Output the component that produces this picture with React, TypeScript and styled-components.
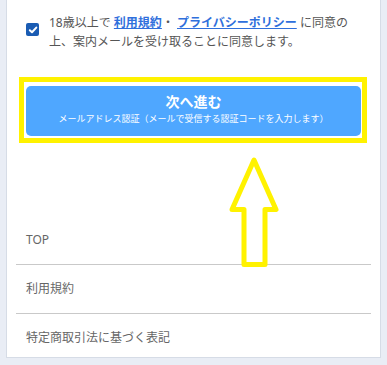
import React from "react";
import styled, { createGlobalStyle } from "styled-components";

const Global = createGlobalStyle`
  html, body { margin: 0; padding: 0; background: #e9edf5; }
  body { font-family: "Noto Sans", "Noto Sans CJK JP", sans-serif; }
  * { box-sizing: border-box; }
`;

const Page = styled.div`
  padding: 0 6px 8px;
`;

const Card = styled.div`
  position: relative;
  background: #ffffff;
  border: 1px solid #d6dce6;
  border-top: none;
  padding: 13px 9px 0;
`;

const Section = styled.div`
  padding: 0 10px;
`;

const AgreeRow = styled.label`
  display: flex;
  align-items: flex-start;
  gap: 10px;
`;

const CheckBox = styled.span`
  flex: none;
  width: 13px;
  height: 13px;
  margin-top: 10px;
  border-radius: 2px;
  background: #1a5cb3;
  display: flex;
  align-items: center;
  justify-content: center;
`;

const AgreeText = styled.p`
  margin: 0;
  font-size: 12px;
  line-height: 19px;
  color: #555555;
`;

const TextLink = styled.a`
  color: #2f6fdc;
  font-weight: 700;
  text-decoration: underline;
`;

const ButtonWrap = styled.div`
  position: relative;
  margin-top: 35px;
`;

const Highlight = styled.div`
  position: absolute;
  left: -7px;
  top: -9px;
  right: -6px;
  bottom: -7px;
  border: 5px solid #fff200;
  pointer-events: none;
`;

const NextButton = styled.button`
  width: 100%;
  height: 50px;
  border: none;
  border-radius: 5px;
  background: #4fa7ff;
  color: #ffffff;
  display: flex;
  flex-direction: column;
  align-items: center;
  padding: 7px 0 0;
  gap: 2px;
  font-family: inherit;
  cursor: pointer;
`;

const ButtonTitle = styled.span`
  font-size: 14px;
  line-height: 18px;
  font-weight: 700;
`;

const ButtonSub = styled.span`
  font-size: 9px;
  line-height: 12px;
`;

const Nav = styled.ul`
  list-style: none;
  margin: 80px 0 0;
  padding: 0;
`;

const NavItem = styled.li<{ $last?: boolean }>`
  padding: 15px 10px ${(p) => (p.$last ? "10px" : "15px")};
  font-size: 12px;
  line-height: 18px;
  color: #666666;
  border-bottom: ${(p) => (p.$last ? "none" : "1px solid #c9c9c9")};
`;

const Arrow = styled.svg`
  position: absolute;
  left: 213px;
  top: 150px;
  width: 70px;
  height: 125px;
  pointer-events: none;
`;

export default function App() {
  return (
    <>
      <Global />
      <Page>
        <Card>
          <Section>
            <AgreeRow>
              <CheckBox>
                <svg width="10" height="10" viewBox="0 0 10 10">
                  <path d="M1.8 5.2 L4 7.3 L8.3 2.6" fill="none" stroke="#fff" strokeWidth="2" strokeLinecap="round" strokeLinejoin="round" />
                </svg>
              </CheckBox>
              <AgreeText>
                18歳以上で <TextLink>利用規約</TextLink>・ <TextLink>プライバシーポリシー</TextLink> に同意の上、案内メールを受け取ることに同意します。
              </AgreeText>
            </AgreeRow>
            <ButtonWrap>
              <NextButton>
                <ButtonTitle>次へ進む</ButtonTitle>
                <ButtonSub>メールアドレス認証（メールで受信する認証コードを入力します）</ButtonSub>
              </NextButton>
              <Highlight />
            </ButtonWrap>
          </Section>
          <Nav>
            <NavItem>TOP</NavItem>
            <NavItem>利用規約</NavItem>
            <NavItem $last>特定商取引法に基づく表記</NavItem>
          </Nav>
          <Arrow viewBox="220 150 70 125">
            <polygon
              points="254,160 276,209.5 265,209.5 265,264.5 244,264.5 244,209.5 232,209.5"
              fill="none"
              stroke="#fff200"
              strokeWidth="5"
              strokeLinejoin="round"
            />
          </Arrow>
        </Card>
      </Page>
    </>
  );
}
